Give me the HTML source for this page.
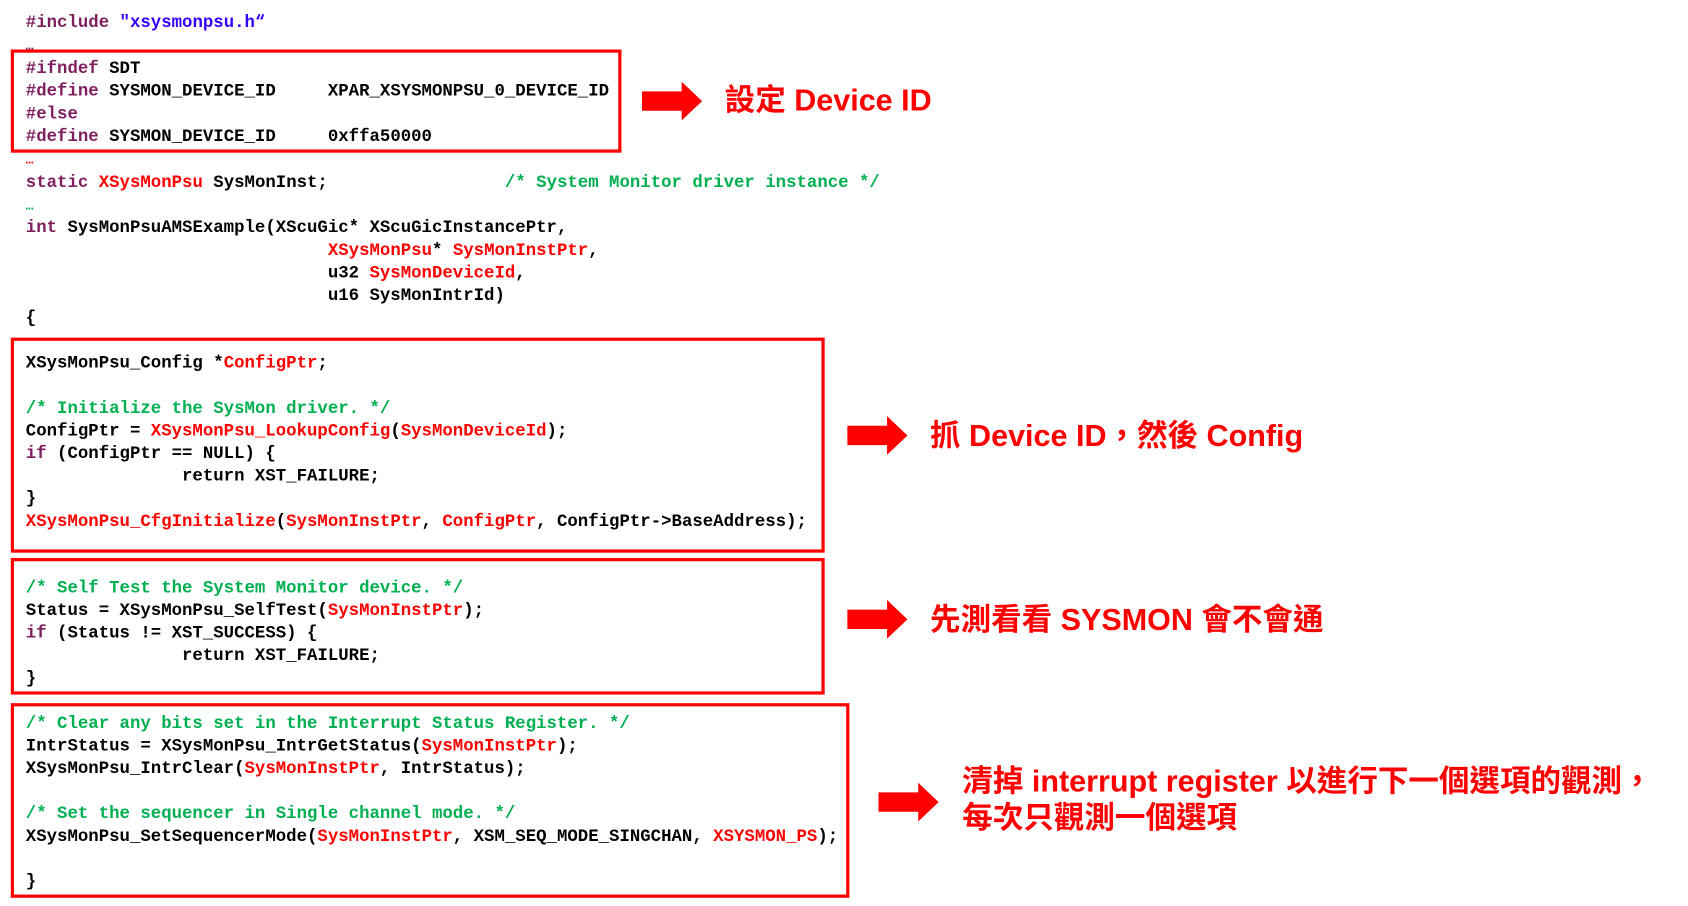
<!DOCTYPE html>
<html><head><meta charset="utf-8"><style>
html,body{margin:0;padding:0;background:#fff;width:1688px;height:906px;overflow:hidden}
#s{position:absolute;left:0;top:0;width:1570px;height:843px;transform:scale(1.0752);transform-origin:0 0}
pre{position:absolute;left:24px;top:11px;margin:0;font-family:"Liberation Mono",monospace;font-size:16.15px;line-height:20.93px;color:#000;font-weight:bold}
.k{color:#7f1f5f}.r{color:#ff0000}.g{color:#00b050}.b{color:#3300ff}
.e{font-size:12px}
.box{position:absolute;border:3px solid #ff0000;box-sizing:border-box}
.arr{position:absolute;width:56px;height:36px}
.t{position:absolute;color:#ff0000;font-family:"Liberation Sans","Noto Sans CJK TC",sans-serif;font-weight:bold;font-size:28.4px;line-height:34px;white-space:nowrap}
</style></head><body><div id="s">
<pre><span class="k">#include</span> <span class="b">"xsysmonpsu.h“</span>
<span class="e" style="color:#7f1f5f">…</span>
<span class="k">#ifndef</span> SDT
<span class="k">#define</span> SYSMON_DEVICE_ID     XPAR_XSYSMONPSU_0_DEVICE_ID
<span class="k">#else</span>
<span class="k">#define</span> SYSMON_DEVICE_ID     0xffa50000
<span class="e r">…</span>
<span class="k">static</span> <span class="r">XSysMonPsu</span> SysMonInst;                 <span class="g">/* System Monitor driver instance */</span>
<span class="e g">…</span>
<span class="k">int</span> SysMonPsuAMSExample(XScuGic* XScuGicInstancePtr,
                             <span class="r">XSysMonPsu</span>* <span class="r">SysMonInstPtr</span>,
                             u32 <span class="r">SysMonDeviceId</span>,
                             u16 SysMonIntrId)
{

XSysMonPsu_Config *<span class="r">ConfigPtr</span>;

<span class="g">/* Initialize the SysMon driver. */</span>
ConfigPtr = <span class="r">XSysMonPsu_LookupConfig</span>(<span class="r">SysMonDeviceId</span>);
<span class="k">if</span> (ConfigPtr == NULL) {
               return XST_FAILURE;
}
<span class="r">XSysMonPsu_CfgInitialize</span>(<span class="r">SysMonInstPtr</span>, <span class="r">ConfigPtr</span>, ConfigPtr-&gt;BaseAddress);


<span class="g">/* Self Test the System Monitor device. */</span>
Status = XSysMonPsu_SelfTest(<span class="r">SysMonInstPtr</span>);
<span class="k">if</span> (Status != XST_SUCCESS) {
               return XST_FAILURE;
}

<span class="g">/* Clear any bits set in the Interrupt Status Register. */</span>
IntrStatus = XSysMonPsu_IntrGetStatus(<span class="r">SysMonInstPtr</span>);
XSysMonPsu_IntrClear(<span class="r">SysMonInstPtr</span>, IntrStatus);

<span class="g">/* Set the sequencer in Single channel mode. */</span>
XSysMonPsu_SetSequencerMode(<span class="r">SysMonInstPtr</span>, XSM_SEQ_MODE_SINGCHAN, <span class="r">XSYSMON_PS</span>);

}</pre>
<div class="box" style="left:10px;top:46px;width:568px;height:96px"></div>
<div class="box" style="left:10px;top:314px;width:757px;height:200px"></div>
<div class="box" style="left:10px;top:519px;width:757px;height:127px"></div>
<div class="box" style="left:10px;top:654px;width:780px;height:181px"></div>
<svg class="arr" style="left:597px;top:76px" viewBox="0 0 56 36"><path d="M0 9H37V0L56 18L37 36V27H0Z" fill="#ff0000"/></svg>
<svg class="arr" style="left:788px;top:387px" viewBox="0 0 56 36"><path d="M0 9H37V0L56 18L37 36V27H0Z" fill="#ff0000"/></svg>
<svg class="arr" style="left:788px;top:558px" viewBox="0 0 56 36"><path d="M0 9H37V0L56 18L37 36V27H0Z" fill="#ff0000"/></svg>
<svg class="arr" style="left:817px;top:728px" viewBox="0 0 56 36"><path d="M0 9H37V0L56 18L37 36V27H0Z" fill="#ff0000"/></svg>
<div class="t" style="left:674px;top:77px">設定 Device ID</div>
<div class="t" style="left:865px;top:389px">抓 Device ID，然後 Config</div>
<div class="t" style="left:865px;top:560px">先測看看 SYSMON 會不會通</div>
<div class="t" style="left:895px;top:710px">清掉 interrupt register 以進行下一個選項的觀測，</div>
<div class="t" style="left:895px;top:744px">每次只觀測一個選項</div>
</div></body></html>
